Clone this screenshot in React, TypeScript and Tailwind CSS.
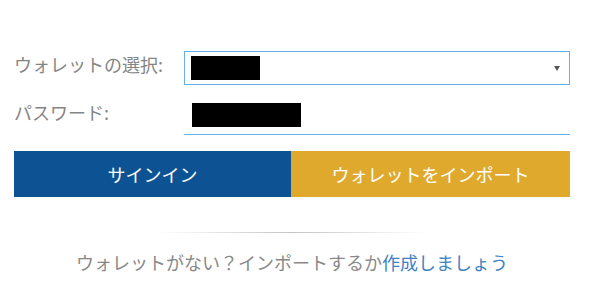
import React from "react";

export default function App() {
  return (
    <div className="w-[590px] h-[307px] bg-white pt-[51px] pl-[14px] pr-[20px] font-['Noto_Sans_CJK_JP',sans-serif]">
      <div className="flex items-start h-[34px]">
        <div className="w-[170px] text-[18px] leading-[24px] text-[#858585] mt-[1px]">ウォレットの選択:</div>
        <div className="relative flex-1 h-[34px] border border-[#6aaee8] bg-white">
          <div className="ml-[6px] mt-[4px] w-[69px] h-[24px] bg-black" />
          <svg className="absolute right-[9px] top-[14px]" width="6" height="5" viewBox="0 0 6 5">
            <path d="M0 0 H6 L3 5 Z" fill="#555" />
          </svg>
        </div>
      </div>
      <div className="flex items-start h-[35px] mt-[15px]">
        <div className="w-[170px] text-[18px] leading-[24px] text-[#858585]">パスワード:</div>
        <div className="flex-1 h-[35px] border-b border-[#6aaee8]">
          <div className="ml-[8px] mt-[3px] w-[109px] h-[24px] bg-black" />
        </div>
      </div>
      <div className="flex h-[46px] mt-[16px]">
        <div className="w-[277px] flex items-center justify-center bg-[#0d5394] text-white text-[18px]">サインイン</div>
        <div className="flex-1 flex items-center justify-center bg-[#dfa92e] text-white text-[18px]">ウォレットをインポート</div>
      </div>
      <div className="mx-auto mt-[35px] w-[270px] h-px bg-gradient-to-r from-transparent via-[#c4c4c4] to-transparent" />
      <div className="mt-[17px] text-center text-[18px] leading-[24px] text-[#888888]">
        ウォレットがない？インポートするか<span className="text-[#3e82c4]">作成しましょう</span>
      </div>
    </div>
  );
}
